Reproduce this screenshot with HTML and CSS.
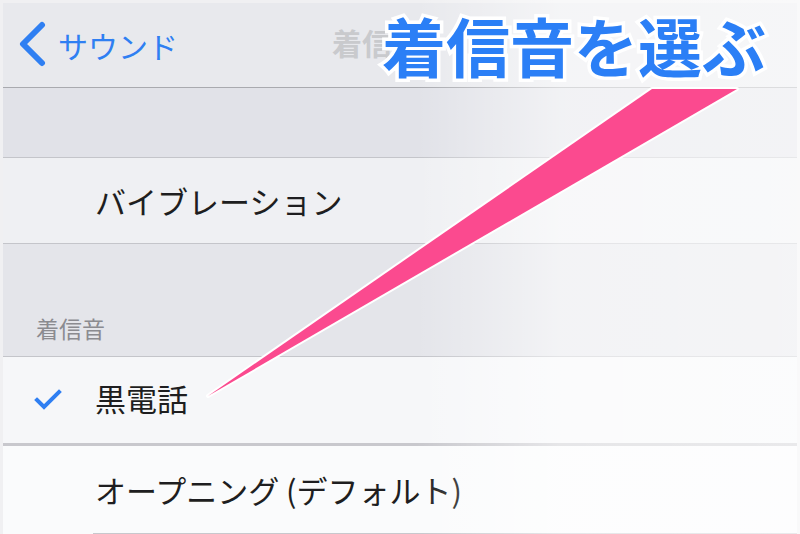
FILE: index.html
```html
<!DOCTYPE html>
<html lang="ja">
<head>
<meta charset="utf-8">
<link rel="stylesheet" href="styles.css">
</head>
<body>
<div class="frame">
  <div class="screen">
    <div class="nav">
      <div class="back">
        <svg class="chev" width="32" height="48" viewBox="0 0 32 48"><path d="M24 4 L5 23 L24 42" fill="none" stroke="#2f7ff2" stroke-width="6" stroke-linecap="round" stroke-linejoin="round"/></svg>
        <span class="back-label">サウンド</span>
      </div>
      <span class="nav-title">着信音</span>
    </div>
    <div class="gap gap-top"></div>
    <div class="row row-vib"><span class="label">バイブレーション</span></div>
    <div class="gap gap-mid"><span class="header">着信音</span></div>
    <div class="row row-sel">
      <svg class="check" width="30" height="24" viewBox="0 0 30 24"><path d="M3 11 L10 18 L25 3" fill="none" stroke="#2f7ff2" stroke-width="4" stroke-linecap="square"/></svg>
      <span class="label">黒電話</span>
    </div>
    <div class="row row-open"><span class="label">オープニング (デフォルト)</span></div>
  </div>
  <div class="fade"></div>
  <svg class="callout" width="800" height="534" viewBox="0 0 800 534">
    <polygon points="652,89 737,89 208,396" fill="#fb4a8f" stroke="#ffffff" stroke-width="4" stroke-linejoin="round" paint-order="stroke"/>
  </svg>
  <div class="big-title">着信音を選ぶ</div>
</div>
</body>
</html>
```

FILE: styles.css
```css
* { box-sizing: border-box; }
html, body { margin: 0; padding: 0; }
body {
  width: 800px;
  height: 534px;
  overflow: hidden;
  font-family: "Noto Sans CJK JP", "Noto Sans", sans-serif;
  background: #f1f1f3;
}
.frame {
  position: relative;
  width: 800px;
  height: 534px;
  padding: 3px 3px 0 3px;
  background: #f0f0f2;
  overflow: hidden;
}
.screen {
  display: flex;
  flex-direction: column;
  height: 100%;
}
.nav {
  height: 85px;
  flex: none;
  background: #e8e9ed;
  border-bottom: 1px solid #a9aaaf;
  display: flex;
  align-items: center;
  position: relative;
}
.back {
  display: flex;
  align-items: center;
  padding-left: 15px;
  margin-top: -1px;
}
.chev { display: block; }
.back-label {
  font-size: 30px;
  color: #2f7ff2;
  margin-left: 8px;
  line-height: 1;
}
.nav-title {
  position: absolute;
  left: 329px;
  top: 24px;
  font-size: 30px;
  font-weight: 700;
  line-height: 1;
  color: #c9cacd;
}
.gap {
  flex: none;
  background: #e1e2e8;
}
.gap-top {
  height: 70px;
  border-bottom: 1px solid #c4c5ca;
}
.gap-mid {
  height: 113px;
  border-bottom: 1px solid #c4c5ca;
  background: #e4e5ea;
  display: flex;
  align-items: flex-end;
  padding: 0 0 16px 33px;
}
.header {
  font-size: 23px;
  line-height: 1;
  color: #8b8b90;
}
.row {
  flex: none;
  display: flex;
  align-items: center;
  padding-left: 92px;
  position: relative;
}
.label {
  font-size: 31px;
  line-height: 1;
  color: #1e1e20;
}
.row-vib {
  height: 86px;
  background: #eff0f3;
  border-bottom: 1px solid #c4c5ca;
}
.row-sel {
  height: 89px;
  background: #f6f7f9;
  border-bottom: 3px solid #c8c8cd;
  padding-bottom: 6px;
}
.check {
  position: absolute;
  left: 31px;
  top: 32px;
}
.row-open {
  height: 88px;
  background: #fafbfc;
  padding-bottom: 2px;
}
.row-open::after {
  content: "";
  position: absolute;
  left: 90px;
  right: 0;
  bottom: 0;
  height: 1px;
  background: #c8c8cd;
}
.fade {
  position: absolute;
  inset: 0;
  background: linear-gradient(to right, rgba(255,255,255,0) 0%, rgba(255,255,255,0) 52%, rgba(255,255,255,0.55) 70%, rgba(255,255,255,0.6) 100%);
  pointer-events: none;
}
.callout {
  position: absolute;
  left: 0;
  top: 0;
}
.big-title {
  position: absolute;
  left: 382px;
  top: 12px;
  font-size: 64px;
  font-weight: 700;
  line-height: 1;
  color: #2b7ff6;
  -webkit-text-stroke: 7px #ffffff;
  paint-order: stroke fill;
  white-space: nowrap;
}
```
